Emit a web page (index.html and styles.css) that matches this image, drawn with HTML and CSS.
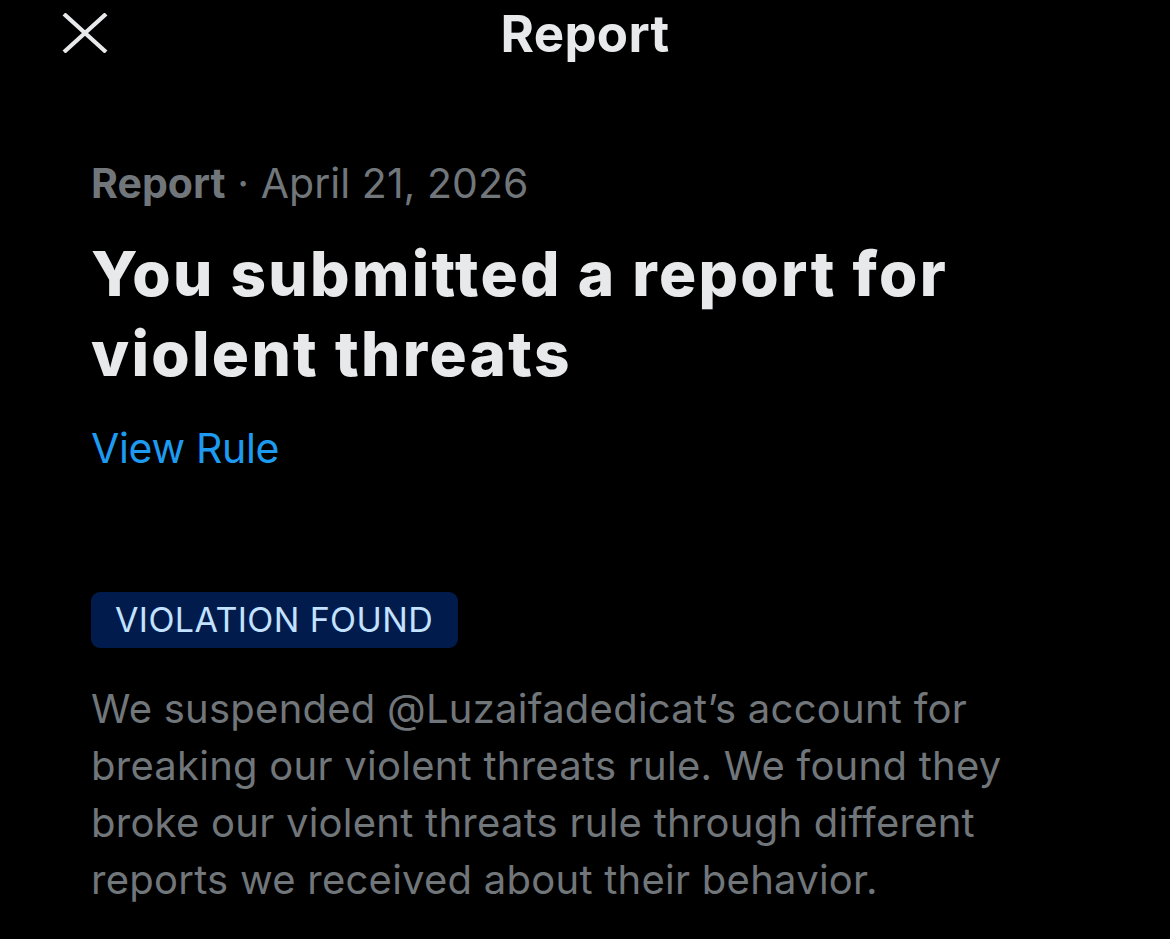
FILE: index.html
```html
<!DOCTYPE html>
<html lang="en">
<head>
<meta charset="utf-8">
<title>Report</title>
<link rel="stylesheet" href="styles.css">
</head>
<body>
<div class="screen">
  <header class="topbar">
    <button class="close" aria-label="Close">
      <svg width="46" height="40" viewBox="0 0 46 40"><path d="M2 1 L44 39 M44 1 L2 39" stroke="#e7e9ea" stroke-width="4.2" fill="none"/></svg>
    </button>
    <h1 class="topbar-title">Report</h1>
  </header>
  <main class="content">
    <p class="meta"><span class="meta-strong">Report</span> · April 21, 2026</p>
    <h2 class="headline">You submitted a report for violent threats</h2>
    <a class="rule-link" href="#">View Rule</a>
    <div class="badge">VIOLATION FOUND</div>
    <p class="body-text">We suspended @Luzaifadedicat’s account for breaking our violent threats rule. We found they broke our violent threats rule through different reports we received about their behavior.</p>
  </main>
</div>
</body>
</html>
```
FILE: styles.css
```css
html, body {
  margin: 0;
  padding: 0;
  background: #000;
}
body {
  font-family: Inter, "Noto Sans", "Liberation Sans", sans-serif;
  color: #e7e9ea;
}
.screen {
  width: 1170px;
  height: 939px;
  overflow: hidden;
  background: #000;
}
.topbar {
  height: 68px;
  display: flex;
  align-items: center;
  justify-content: center;
  position: relative;
}
.close {
  position: absolute;
  left: 62px;
  top: 13px;
  background: none;
  border: 0;
  padding: 0;
  width: 46px;
  height: 40px;
  display: block;
}
.close svg { display: block; }
.topbar-title {
  margin: 0;
  font-size: 51px;
  line-height: 68px;
  font-weight: 700;
  letter-spacing: 0.3px;
  color: #e7e9ea;
}
.content {
  padding: 0 91px;
  display: flex;
  flex-direction: column;
  align-items: flex-start;
}
.meta {
  margin: 90px 0 0;
  font-size: 41px;
  line-height: 50px;
  color: #71767b;
  letter-spacing: 0.05px;
}
.meta-strong {
  font-weight: 700;
}
.headline {
  margin: 26px 0 0;
  font-size: 62px;
  line-height: 80px;
  font-weight: 800;
  letter-spacing: 2.3px;
  color: #e7e9ea;
}
.rule-link {
  margin-top: 29px;
  font-size: 41px;
  line-height: 50px;
  color: #1d9bf0;
  text-decoration: none;
  letter-spacing: -0.3px;
}
.badge {
  margin-top: 119px;
  height: 56px;
  line-height: 56px;
  padding: 0 25px 0 24px;
  background: #011b4d;
  border-radius: 9px;
  color: #c2e2ff;
  font-size: 34px;
  letter-spacing: 0.4px;
}
.body-text {
  margin: 32px 0 0;
  font-size: 40px;
  line-height: 57px;
  color: #71767b;
  letter-spacing: 0.25px;
}
```
